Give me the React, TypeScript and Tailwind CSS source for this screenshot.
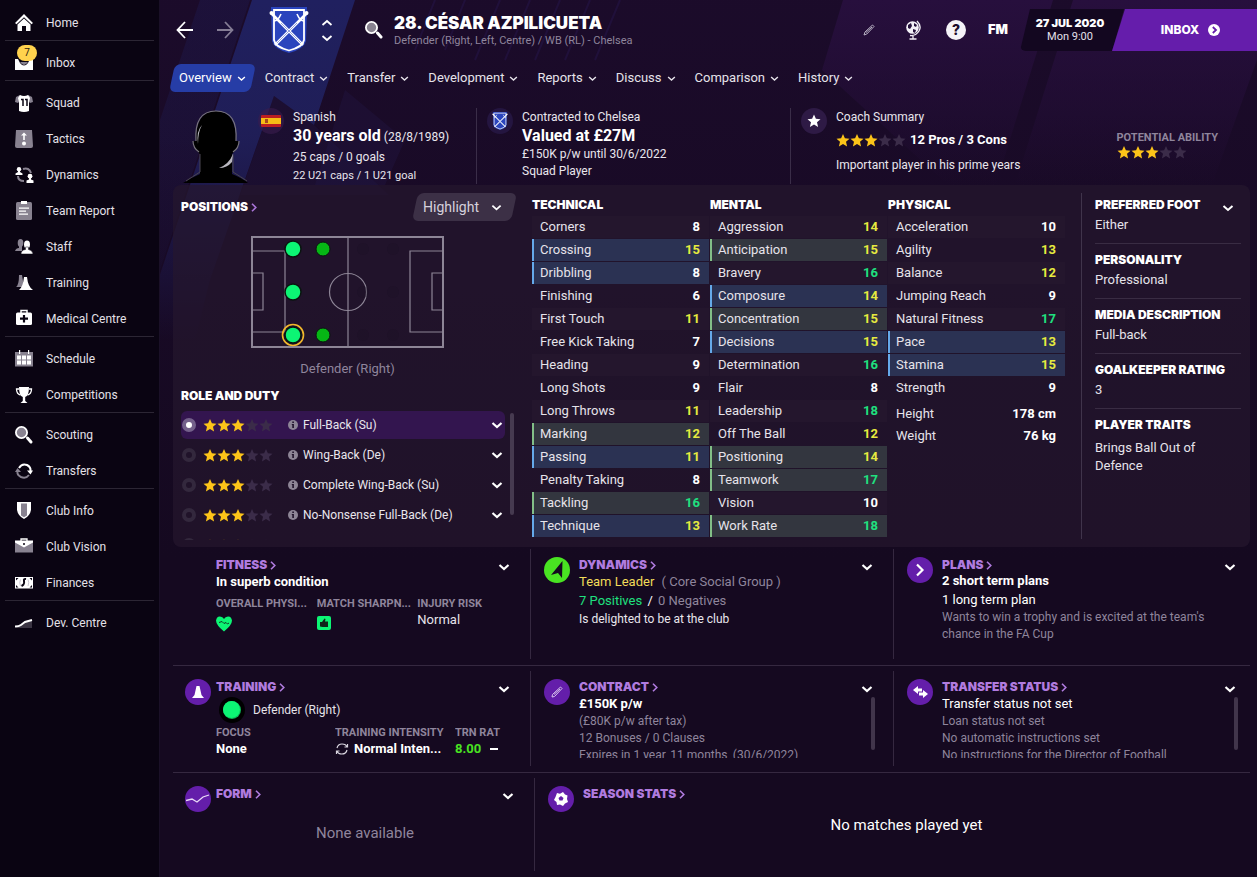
import type { ReactNode } from 'react'

/* ---------- shared bits ---------- */

const heading = "font-['Inter',sans-serif] text-xs font-black uppercase"

function Chevron({ size = 12, weight = 2, className = '' }: { size?: number; weight?: number; className?: string }) {
  return (
    <svg width={size} height={size} viewBox="0 0 12 12" fill="none" stroke="currentColor" strokeWidth={weight} className={className}>
      <path d="M1.5 4 6 8l4.500-4" />
    </svg>
  )
}

function Arrow() {
  return (
    <svg width="6" height="9" viewBox="0 0 6 9" fill="none" stroke="currentColor" strokeWidth="1.600">
      <path d="M1 .7 4.800 4.500 1 8.300" />
    </svg>
  )
}

function Stars({ value, dim = false }: { value: number; dim?: boolean }) {
  return (
    <span className={`flex shrink-0 ${dim ? 'opacity-30' : ''}`} role="img" aria-label={`${value} / 5`}>
      {[1, 2, 3, 4, 5].map((n) => (
        <svg key={n} width="14" height="13" viewBox="0 0 14 13" fill={n <= value ? '#fcc419' : '#3b2c49'}>
          <path d="M7 0l1.900 4.300 4.600.4-3.500 3.100 1.100 4.700L7 10l-4.100 2.500L4 7.800.500 4.700l4.600-.4z" />
        </svg>
      ))}
    </span>
  )
}

function Crest({ className }: { className: string }) {
  return (
    <svg viewBox="0 0 40 46" className={className} fill="none">
      <path d="M2 0h36l-1 34q-2 8-17 12Q5 42 3 34z" fill="#2a44bd" />
      <path d="M5 3h30v30q-1 7-15 10.500Q6 40 5 33z" stroke="#fff" strokeWidth="1.800" />
      <path d="M2 6l32 32M38 6 6 38" stroke="#fff" strokeWidth="2.600" />
      <path d="M5 14q4 0 7-7M28 7q3 7 7 7" stroke="#fff" strokeWidth="1.600" />
      <circle cx="2.500" cy="6" r="2" fill="#fff" />
      <circle cx="37.500" cy="6" r="2" fill="#fff" />
      <path d="M12 16l20 20M28 16 8 36" stroke="#2a44bd" strokeWidth=".5" />
    </svg>
  )
}

/* ---------- sidebar ---------- */

const icons: Record<string, ReactNode> = {
  home: (
    <>
      <path d="M0 9 9 0l9 9-1.500 1.300L9 3.200 1.500 10.300z" fill="#fff" />
      <path d="M2.500 10.500 9 4.500l6.500 6V17h-4.500v-5h-4v5H2.500z" fill="#fff" />
    </>
  ),
  inbox: (
    <>
      <path d="M0 5h3l2 4q4 5 8 0l2-4h3v11H0z" fill="#fff" />
      <path d="M5 8h8q-4 6-8 0z" fill="#888290" />
    </>
  ),
  squad: (
    <>
      <path d="M5 1 1 3 0 8l3 1 2-2zM13 1l4 2 1 5-3 1-2-2z" fill="#888290" />
      <path d="M5 1q4 2 8 0l2 3-1 4v9q-5 2-10 0V8L3 4z" fill="#fff" />
      <path d="M6 5.500h2V12M10 5.500h2V12" stroke="#0a0412" strokeWidth="1.500" fill="none" />
    </>
  ),
  tactics: (
    <>
      <path d="M1 0h16l1 16q0 2-2 2H2q-2 0-2-2z" fill="#888290" />
      <path d="M8.200 10V5.500H6L9 2.500l3 3H9.800V10z" fill="#fff" />
      <circle cx="9" cy="13.500" r="2" fill="#fff" />
    </>
  ),
  dynamics: (
    <>
      <path d="M8 3q6-2 8 4M3 10q0 5 6 5" stroke="#888290" strokeWidth="2" fill="none" />
      <circle cx="4" cy="3.200" r="2.200" fill="#fff" />
      <path d="M3 4h2v2l2.500 1.500V9H.500V7.500L3 6z" fill="#fff" />
      <circle cx="15" cy="10.200" r="2.400" fill="#fff" />
      <path d="M14 11h2v2.500l2.500 1V17h-7v-2.500l2.500-1z" fill="#fff" />
    </>
  ),
  report: (
    <>
      <rect x="1" y="0" width="16" height="18" rx="1.500" fill="#888290" />
      <path d="M6-1h6v3H6zM4 5.500h10v1.200H4zM4 8.500h7v1.200H4zM4 11.500h9v1.200H4z" fill="#fff" />
    </>
  ),
  staff: (
    <>
      <ellipse cx="5.500" cy="5" rx="2.800" ry="4" fill="#888290" />
      <path d="M0 13q1-3 4-3V8h3v5z" fill="#888290" />
      <ellipse cx="12" cy="6.500" rx="3" ry="4" fill="#fff" />
      <path d="M6 16q0-4 4.500-4.500V9h3v2.500q4 .5 4.500 4.500z" fill="#fff" stroke="#0a0412" strokeWidth=".5" />
    </>
  ),
  training: (
    <>
      <path d="M1 13q3-2 3-12h3l2 12z" fill="#888290" />
      <path d="M4 16q4-3 5-13h3q1 10 6 13z" fill="#fff" />
    </>
  ),
  medical: (
    <>
      <path d="M6 3V.500h6V3" stroke="#fff" strokeWidth="1.500" fill="none" />
      <rect x="1" y="2.500" width="16" height="12.500" rx="1.500" fill="#fff" />
      <path d="M9 5v7.500M5 8.700h8" stroke="#0a0412" strokeWidth="2.200" />
    </>
  ),
  schedule: (
    <>
      <path d="M0 2h18v14.500H0z" fill="#888290" />
      <path d="M2 5.500h4v4H2zM7 5.500h4v4H7zM12 5.500h4v4h-4zM2 10.500h4v4H2zM7 10.500h4v4H7zM12 10.500h4v4h-4zM4 0h1.200v4H4zM13 0h1.200v4H13z" fill="#fff" />
    </>
  ),
  cup: (
    <>
      <path d="M4 3H1.500q0 5 4 6M14 3h2.500q0 5-4 6" stroke="#fff" strokeWidth="1.300" fill="none" />
      <path d="M4 1h10q0 9-3.800 10v4l2.300 2h-7l2.300-2v-4Q4 10 4 1z" fill="#fff" />
    </>
  ),
  search: (
    <>
      <circle cx="6.500" cy="6.500" r="5.600" fill="#888290" stroke="#fff" strokeWidth="1.800" />
      <path d="m12.500 12 3.500 4" stroke="#fff" strokeWidth="3" strokeLinecap="round" />
    </>
  ),
  transfers: (
    <>
      <path d="M4 6q3-5 8-3 4 2 3.500 6" stroke="#fff" strokeWidth="2" fill="none" />
      <path d="M18 8.500h-6l3.500 4z" fill="#fff" />
      <path d="M14 13q-3 4-8 2-4-2-3.500-5" stroke="#888290" strokeWidth="2" fill="none" />
      <path d="M0 10h6L2.500 6z" fill="#888290" />
    </>
  ),
  shield: (
    <>
      <path d="M2 0h14v8q-1 6-7 9-6-3-7-9z" fill="#fff" />
      <path d="M6 1.500h6v12l-3 1.700-3-1.700z" fill="#888290" />
    </>
  ),
  briefcase: (
    <>
      <path d="M6 3V1h6v2" stroke="#fff" strokeWidth="1.300" fill="none" />
      <path d="M0 3h18v11.500H0z" fill="#888290" />
      <path d="M0 2.500h18v2L9 9.500 0 4.500z" fill="#fff" />
      <circle cx="9" cy="6" r="1" fill="#0a0412" />
    </>
  ),
  money: (
    <>
      <path d="M0 3h18v11.500H0z" fill="#fff" />
      <path d="M11 5q-2.500-.5-2 2t-.500 3.500-2 1.500" stroke="#0a0412" strokeWidth="2" fill="none" />
      <path d="M5.500 5.500q-1.500 3 0 6.500M13 5.500q1.500 3 0 6.500" stroke="#c9c5cf" strokeWidth="1" fill="none" />
      <path d="M1 4h2.500L1 6.500zM17 4h-2.500L17 6.500zM1 13.500h2.500L1 11zM17 13.500h-2.500L17 11z" fill="#0a0412" />
    </>
  ),
  chart: (
    <>
      <path d="M1 13l6-1.500 4-3 6-2V14H1z" fill="#3a3442" />
      <path d="M0 12.500q4 0 6-1.500t4-3l7-2" stroke="#fff" strokeWidth="2" fill="none" />
    </>
  ),
}

const navGroups = [
  [['home', 'Home']],
  [['inbox', 'Inbox']],
  [
    ['squad', 'Squad'],
    ['tactics', 'Tactics'],
    ['dynamics', 'Dynamics'],
    ['report', 'Team Report'],
    ['staff', 'Staff'],
    ['training', 'Training'],
    ['medical', 'Medical Centre'],
  ],
  [
    ['schedule', 'Schedule'],
    ['cup', 'Competitions'],
  ],
  [
    ['search', 'Scouting'],
    ['transfers', 'Transfers'],
  ],
  [
    ['shield', 'Club Info'],
    ['briefcase', 'Club Vision'],
    ['money', 'Finances'],
  ],
  [['chart', 'Dev. Centre']],
]

function Sidebar() {
  return (
    <nav className="w-40 shrink-0 border-r border-[#1a1027] bg-[#0a0412] px-[5px] pt-px">
      {navGroups.map((group, i) => (
        <ul key={i} className="border-b border-[#2c2634] pt-[3px] last:border-0">
          {group.map(([icon, label]) => (
            <li key={label}>
              <a href="#" className="relative flex h-9 items-center gap-[13px] pt-[2px] pl-[10px] text-xs text-[#e4e1e8]">
                <svg width="18" height="18" viewBox="0 0 18 18" className="overflow-visible">
                  {icons[icon]}
                </svg>
                {label}
                {icon === 'inbox' && (
                  <span className="absolute top-px left-3 flex h-4 w-5 items-center justify-center rounded-full bg-[#ffd24d] text-[10px] text-[#2b2111]">
                    7
                  </span>
                )}
              </a>
            </li>
          ))}
        </ul>
      ))}
    </nav>
  )
}

/* ---------- header ---------- */

function Header() {
  return (
    <header className="flex h-[60px] items-center">
      <button aria-label="Back" className="ml-4">
        <svg width="18" height="18" viewBox="0 0 18 18" fill="none" stroke="#fff" strokeWidth="1.800">
          <path d="M17 9H1.500M9 1 1.500 9 9 17" />
        </svg>
      </button>
      <button aria-label="Forward" className="ml-[22px]">
        <svg width="18" height="18" viewBox="0 0 18 18" fill="none" stroke="#857d95" strokeWidth="1.800">
          <path d="M1 9h15.500M9 1l7.500 8L9 17" />
        </svg>
      </button>
      <Crest className="ml-[35px] h-[46px] w-10" />
      <div className="ml-3 flex flex-col gap-[3px] text-white">
        <button aria-label="Previous player">
          <Chevron className="rotate-180" weight={1.800} />
        </button>
        <button aria-label="Next player">
          <Chevron weight={1.800} />
        </button>
      </div>
      <button aria-label="Search" className="ml-8">
        <svg width="18" height="18" viewBox="0 0 18 18">{icons.search}</svg>
      </button>
      <div className="ml-[11px] pt-px">
        <h1 className="font-['Inter',sans-serif] text-[17px] leading-5 font-black text-white">28. CÉSAR AZPILICUETA</h1>
        <p className="text-[11px] leading-4 text-[#8f859c]">Defender (Right, Left, Centre) / WB (RL) - Chelsea</p>
      </div>

      <div className="ml-auto flex items-center">
        <button aria-label="Edit" className="mr-[29px]">
          <svg width="12" height="12" viewBox="0 0 12 12" fill="none" stroke="#b9b2c4" strokeWidth="1">
            <path d="M1 11l1-3L9.500 1 11 2.500 3.800 10zM3 8.500 9 3" />
          </svg>
        </button>
        <button aria-label="World" className="mr-6">
          <svg width="18" height="20" viewBox="0 0 18 20" fill="none">
            <circle cx="8.500" cy="7.500" r="6.300" fill="#f3f0f7" />
            <path d="M4 5l3-2 1 3-2 3-2-1zM10 3l3 2-1 2-2-1zM9 9l3 1-1 3-2-1z" fill="#23103a" />
            <path d="M13 1q5 5 2 10t-9 4.500M9 16v2.500M5.500 19h7" stroke="#f3f0f7" strokeWidth="1.300" />
          </svg>
        </button>
        <button
          aria-label="Help"
          className="mr-[22px] flex size-5 items-center justify-center rounded-full bg-[#f5f3f8] font-['Inter',sans-serif] text-sm font-extrabold text-[#1b0c2b]"
        >
          ?
        </button>
        <button className="mr-3 font-['Inter',sans-serif] text-[13px] font-black text-white">FM</button>
        <div className="flex h-[42px] w-[104px] flex-col items-center justify-center rounded-l-md bg-[#130720] pr-1 [clip-path:polygon(10px_0,100%_0,calc(100%_-_12px)_100%,0_100%)]">
          <span className="font-['Inter',sans-serif] text-[11px] leading-[14px] font-black text-white">27 JUL 2020</span>
          <span className="text-[11px] leading-[14px] text-[#e4e0ea]">Mon 9:00</span>
        </div>
        <button className="-ml-3 flex h-[42px] w-[145px] items-center justify-center gap-[9px] bg-[#651dab] pl-3 font-['Inter',sans-serif] text-xs font-extrabold text-white [clip-path:polygon(13px_0,100%_0,100%_100%,0_100%)]">
          INBOX
          <svg width="12" height="12" viewBox="0 0 12 12" fill="none">
            <circle cx="6" cy="6" r="6" fill="#fff" />
            <path d="M4.800 3 8 6 4.800 9" stroke="#651dab" strokeWidth="1.800" />
          </svg>
        </button>
      </div>
    </header>
  )
}

const tabs = ['Overview', 'Contract', 'Transfer', 'Development', 'Reports', 'Discuss', 'Comparison', 'History']

function Tabs() {
  return (
    <div className="flex h-9 items-center pl-[9px]">
      {tabs.map((tab, i) => (
        <button
          key={tab}
          className={
            i === 0
              ? 'relative mr-[9px] flex h-7 items-center gap-[5px] px-[10px] text-[13px] text-white'
              : 'mr-[19px] flex h-7 items-center gap-[5px] text-[13px] text-[#e6e3ea]'
          }
        >
          {i === 0 && <span className="absolute inset-x-[3px] inset-y-0 -z-10 -skew-x-12 rounded-md bg-[#263da6]" />}
          {tab}
          <Chevron size={9} weight={1.900} />
        </button>
      ))}
    </div>
  )
}

/* ---------- player summary ---------- */

function Summary() {
  return (
    <section className="ml-[13px] mr-[7px] grid h-[89px] grid-cols-[303fr_314fr_460fr] pt-3 pb-[2px] text-xs text-[#e9e6ed]">
      <div className="flex pl-[10px]">
        <svg width="66" height="75" viewBox="0 0 66 75" className="shrink-0">
          <path d="M0 75q8-5 17-9V46l-3-3q-4-4-4-10h3Q13 3 33 3t20 30h3q0 6-4 10l-3 3v20q10 4 16 9z" fill="#000" />
          <path d="M13 33Q11 3 33 3t20 30M56 33q0 7-6 11M10 33q0 7 6 11" stroke="#77737d" strokeWidth="1.200" fill="none" />
          <path d="M50 46v18q8 5 14 9M17 46v18q-8 5-14 9" stroke="#4a4650" fill="none" />
          <path d="M19 17q-6 6-4 19 0-12 4-19zM50 46q-4 10-14 14 8 0 13-6z" fill="#b9b7bf" />
        </svg>
        <div className="mr-px ml-[9px] flex size-[26px] shrink-0 items-center justify-center rounded-full bg-[#3a1d4e]/60">
          <svg width="20" height="12" viewBox="0 0 20 12">
            <rect width="20" height="12" rx="1" fill="#bb1d22" />
            <path d="M0 3h20v6H0z" fill="#f6bd16" />
            <rect x="4" y="4" width="3" height="4" fill="#a8481e" />
          </svg>
        </div>
        <div className="ml-2 whitespace-nowrap">
          <p className="leading-[18px]">Spanish</p>
          <p className="leading-[19px]">
            <strong className="text-base leading-[19px] text-white">30 years old</strong> <span>(28/8/1989)</span>
          </p>
          <p className="leading-[20px]">25 caps / 0 goals</p>
          <p className="text-[11px] leading-[17px]">22 U21 caps / 1 U21 goal</p>
        </div>
      </div>
      <div className="flex gap-[9px] border-l border-[#3a2d48] pl-[10px]">
        <div className="flex size-[26px] shrink-0 items-center justify-center rounded-full bg-[#2a1a4a]/70">
          <Crest className="h-[18px] w-4" />
        </div>
        <div className="whitespace-nowrap">
          <p className="leading-[18px]">Contracted to Chelsea</p>
          <p className="text-base leading-[19px] font-bold text-white">Valued at £27M</p>
          <p className="leading-[18px]">£150K p/w until 30/6/2022</p>
          <p className="leading-[17px]">Squad Player</p>
        </div>
      </div>
      <div className="flex gap-[9px] border-l border-[#3a2d48] pl-[10px]">
        <div className="flex size-[26px] shrink-0 items-center justify-center rounded-full bg-[#2e1a45]">
          <svg width="14" height="14" viewBox="0 0 14 13" fill="#fff">
            <path d="M7 0l1.900 4.300 4.600.4-3.500 3.100 1.100 4.700L7 10l-4.100 2.500L4 7.800.500 4.700l4.600-.4z" />
          </svg>
        </div>
        <div>
          <p className="leading-[18px]">Coach Summary</p>
          <p className="mt-[2px] flex items-center gap-1 text-[13px] leading-[24px] font-bold text-white">
            <Stars value={3} /> 12 Pros / 3 Cons
          </p>
          <p className="mt-1 leading-[18px]">Important player in his prime years</p>
        </div>
        <div className="mr-8 ml-auto mt-[22px]">
          <p className="text-[11px] leading-4 font-bold text-[#8f859c]">POTENTIAL ABILITY</p>
          <Stars value={3} />
        </div>
      </div>
    </section>
  )
}

/* ---------- positions and roles ---------- */

function Pitch() {
  return (
    <svg width="193" height="112" viewBox="0 0 193 112" fill="none" className="mx-auto mt-[15px]">
      <g stroke="#8d8596" strokeWidth="1.200">
        <rect x="1" y="1" width="191" height="110" strokeWidth="2" />
        <path d="M97 1v110M1 15h33v81H1M1 37h11v37H1M192 15h-33v81h33M192 37h-11v37h11" />
        <circle cx="97" cy="56" r="18.500" />
      </g>
      <g fill="#1a1024">
        {[112, 142].flatMap((x) => [13, 56, 99].map((y) => <circle key={`${x}${y}`} cx={x} cy={y} r="6" opacity=".3" />))}
      </g>
      <g fill="#0cf574" stroke="#0a1410" strokeWidth="1.500">
        <circle cx="42" cy="13" r="8" />
        <circle cx="42" cy="56" r="8" />
        <circle cx="42" cy="99" r="8" />
      </g>
      <circle cx="42" cy="99" r="10.500" stroke="#f2b92c" strokeWidth="1.600" />
      <g fill="#06b615" stroke="#0a1410">
        <circle cx="72" cy="13" r="7" />
        <circle cx="72" cy="99" r="7" />
      </g>
    </svg>
  )
}

const roles = ['Full-Back (Su)', 'Wing-Back (De)', 'Complete Wing-Back (Su)', 'No-Nonsense Full-Back (De)', '']

function Positions() {
  return (
    <div className="pt-2 pb-[7px] pr-[18px] pl-2">
      <div className="flex h-7 items-center justify-between">
        <a href="#" className={`${heading} flex items-center gap-[3px] text-white`}>
          Positions <span className="text-[#a974d8]"><Arrow /></span>
        </a>
        <button className="relative flex h-7 items-center gap-3 pr-3 pl-2 text-sm text-[#d6d1dc]">
          <span className="absolute inset-0 -z-10 -skew-x-12 rounded-md bg-[#3c3046]" />
          Highlight
          <Chevron size={11} weight={2} className="text-white" />
        </button>
      </div>
      <Pitch />
      <p className="mt-[9px] text-center text-[13px] leading-6 text-[#8f859c]">Defender (Right)</p>
      <h2 className={`${heading} mt-[5px] leading-5 text-white`}>Role and Duty</h2>
      <div className="mt-[5px] flex gap-[5px]">
        <div className="flex h-[129px] flex-1 flex-col gap-[2px] overflow-hidden">
          {roles.map((role, i) => (
            <div
              key={i}
              className={`flex h-7 shrink-0 items-center rounded-md pr-[2px] pl-px text-[#e9e6ed] ${i === 0 ? 'bg-[#33154f]' : ''}`}
            >
              <label className="flex flex-1 items-center text-xs">
                <input
                  type="radio"
                  name="role"
                  defaultChecked={i === 0}
                  className="mr-[7px] size-[14px] appearance-none rounded-full border-4 border-[#33283d] checked:border-[#73608a] checked:bg-white"
                />
                <Stars value={3} dim={!role} />
                {role && (
                  <svg width="10" height="10" viewBox="0 0 10 10" className="mr-[5px] ml-[15px]">
                    <circle cx="5" cy="5" r="5" fill="#8d8596" />
                    <path d="M4.300 1.500h1.600V3H4.300zM3.800 4h2.100v4H4.300V5h-.5z" fill="#1f122a" />
                  </svg>
                )}
                {role}
              </label>
              {role && (
                <button aria-label={`Choose duty for ${role}`} className="text-white">
                  <Chevron weight={2.200} />
                </button>
              )}
            </div>
          ))}
        </div>
        <div className="mt-[2px] h-[102px] w-1 rounded-full bg-[#463a50]" />
      </div>
    </div>
  )
}

/* ---------- attributes ---------- */

type Attribute = [name: string, value: number, mark?: 'key' | 'useful']

const technical: Attribute[] = [
  ['Corners', 8],
  ['Crossing', 15, 'key'],
  ['Dribbling', 8, 'key'],
  ['Finishing', 6],
  ['First Touch', 11],
  ['Free Kick Taking', 7],
  ['Heading', 9],
  ['Long Shots', 9],
  ['Long Throws', 11],
  ['Marking', 12, 'useful'],
  ['Passing', 11, 'key'],
  ['Penalty Taking', 8],
  ['Tackling', 16, 'useful'],
  ['Technique', 13, 'key'],
]

const mental: Attribute[] = [
  ['Aggression', 14],
  ['Anticipation', 15, 'useful'],
  ['Bravery', 16],
  ['Composure', 14, 'key'],
  ['Concentration', 15, 'useful'],
  ['Decisions', 15, 'key'],
  ['Determination', 16],
  ['Flair', 8],
  ['Leadership', 18],
  ['Off The Ball', 12],
  ['Positioning', 14, 'useful'],
  ['Teamwork', 17, 'useful'],
  ['Vision', 10],
  ['Work Rate', 18, 'useful'],
]

const physical: Attribute[] = [
  ['Acceleration', 10],
  ['Agility', 13],
  ['Balance', 12],
  ['Jumping Reach', 9],
  ['Natural Fitness', 17],
  ['Pace', 13, 'key'],
  ['Stamina', 15, 'key'],
  ['Strength', 9],
]

function valueColor(value: number) {
  if (value > 15) return 'text-[#1fe07f]'
  if (value > 10) return 'text-[#e6ea3f]'
  return 'text-white'
}

function rowColor(mark: Attribute[2], index: number) {
  if (mark === 'key') return 'bg-[#2b3253]'
  if (mark === 'useful') return 'bg-[#33363f]'
  return index % 2 === 0 ? 'bg-[#24162d]' : ''
}

function edgeColor(mark: Attribute[2]) {
  if (mark === 'key') return 'border-[#65a9ea]'
  if (mark === 'useful') return 'border-[#82bf87]'
  return 'border-transparent'
}

function AttributeTable({ title, rows }: { title: string; rows: Attribute[] }) {
  return (
    <table className="w-full border-separate border-spacing-x-0 border-spacing-y-px text-[13px] leading-[22px]">
      <caption className={`${heading} text-left leading-5 text-white`}>{title}</caption>
      <tbody>
        {rows.map(([name, value, mark], i) => (
          <tr key={name} className={rowColor(mark, i)}>
            <th scope="row" className={`border-l-2 p-0 pl-[6px] text-left font-normal text-[#e6e3ea] ${edgeColor(mark)}`}>
              {name}
            </th>
            <td className={`p-0 pr-[9px] text-right font-bold ${valueColor(value)}`}>{value}</td>
          </tr>
        ))}
      </tbody>
    </table>
  )
}

function Attributes() {
  return (
    <div className="grid grid-cols-3 items-start gap-px pt-[10px] pr-4">
      <AttributeTable title="Technical" rows={technical} />
      <AttributeTable title="Mental" rows={mental} />
      <div>
        <AttributeTable title="Physical" rows={physical} />
        <dl className="mt-[3px] grid grid-cols-2 pr-[9px] pl-2 text-[13px] leading-[22px] text-[#e6e3ea]">
          <dt>Height</dt>
          <dd className="text-right font-bold text-white">178 cm</dd>
          <dt>Weight</dt>
          <dd className="text-right font-bold text-white">76 kg</dd>
        </dl>
      </div>
    </div>
  )
}

const profile = [
  ['Preferred Foot', 'Either'],
  ['Personality', 'Professional'],
  ['Media Description', 'Full-back'],
  ['Goalkeeper Rating', '3'],
  ['Player Traits', 'Brings Ball Out of Defence'],
]

function Profile() {
  return (
    <div className="relative my-2 border-l border-[#40344b] pr-[9px] pl-[13px]">
      <dl className="text-[13px] leading-[18px] text-[#e6e3ea]">
        {profile.map(([label, value], i) => (
          <div key={label} className={`border-[#392c43] ${i < 4 ? 'border-b pb-[9px]' : ''} ${i > 0 ? 'pt-[6px]' : 'pt-[2px]'}`}>
            <dt className={`${heading} whitespace-nowrap leading-5 text-white`}>{label}</dt>
            <dd className={i === 4 ? 'mt-1 pr-5' : 'mt-px'}>{value}</dd>
          </div>
        ))}
      </dl>
      <button aria-label="Change profile view" className="absolute top-[9px] right-4 text-white">
        <Chevron size={12} weight={2} />
      </button>
    </div>
  )
}

/* ---------- lower cards ---------- */

interface CardProps {
  title: string
  icon?: ReactNode
  green?: boolean
  menu?: boolean
  first?: boolean
  scroll?: boolean
  last?: boolean
  children?: ReactNode
}

function Card({ title, icon, green = false, menu = true, first = false, last = false, scroll = false, children }: CardProps) {
  return (
    <section
      className={`relative flex min-w-0 ${last ? 'pr-[14px]' : 'pr-5'} ${first ? 'gap-[5px] pl-3' : 'gap-[9px] border-l border-[#352840] pl-[13px]'}`}
    >
      <div
        className={`mt-2 flex size-[26px] shrink-0 items-center justify-center rounded-full ${icon ? (green ? 'bg-[#49e322]' : 'bg-[#641eaa]') : ''}`}
      >
        {icon}
      </div>
      <div className="min-w-0 flex-1">
        <div className="-mb-1 flex h-6 items-center justify-between pt-2">
          <a href="#" className={`${heading} flex items-center gap-[3px] leading-4 text-[#b07bdf]`}>
            {title} <Arrow />
          </a>
          {menu && (
            <button aria-label={`${title} options`} className="pt-1 text-white">
              <Chevron weight={2.200} />
            </button>
          )}
        </div>
        {children}
      </div>
      {scroll && <div className={`absolute bottom-4 h-[53px] w-1 rounded-full bg-[#41354b] ${last ? 'right-3' : 'right-[18px]'}`} />}
    </section>
  )
}

const rowClass = 'border-t border-[#352840] pt-[5px] pb-[6px]'
const labelClass = 'truncate text-[11px] font-bold text-[#8f859c]'
const detailsClass = 'mt-[3px] h-[64px] overflow-hidden pr-5 text-xs leading-[17px] whitespace-nowrap text-[#8f859c]'

export default function App() {
  return (
    <div className="flex min-h-screen bg-[#150920] font-['Roboto',sans-serif]">
      <Sidebar />
      <main className="relative isolate min-w-0 flex-1 overflow-hidden">
        <svg className="absolute top-0 left-0 -z-20" width="1400" height="560" viewBox="0 0 1400 560" fill="none">
          <defs>
            <linearGradient id="ribbon" gradientUnits="userSpaceOnUse" x1="0" y1="0" x2="0" y2="340">
              <stop stopColor="#20205f" />
              <stop offset=".4" stopColor="#20205c" stopOpacity=".9" />
              <stop offset="1" stopColor="#20205f" stopOpacity="0" />
            </linearGradient>
            <linearGradient id="glow" x1="0" y1="0" x2="0" y2="1">
              <stop stopColor="#270f3d" />
              <stop offset="1" stopColor="#270f3d" stopOpacity="0" />
            </linearGradient>
          </defs>
          <path d="M0 0h1400v560H0z" fill="url(#glow)" opacity=".35" />
          <path d="M40 0h50L0 270V120z" fill="url(#ribbon)" opacity=".3" />
          <path d="M92 0h103l-41 125-40-29-64 184-15 60h-57z" fill="url(#ribbon)" />
          <path d="M114 96l40 29 75 70H80z" fill="#231b4c" opacity=".25" />
          <path d="M185 90l60 50-20 45h-70z" fill="#231b4c" opacity=".3" />
          <path
            d="M255 50l20-50M285 50l20-50M315 60l25-60M345 60l25-60M375 60l25-60M405 60l25-60M435 60l25-60"
            stroke="#251446"
            strokeWidth="2"
            opacity=".6"
          />
          <path d="M683 0h210l-57 185h-48L662 70z" fill="url(#glow)" />
          <path d="M913 0h184v60l-45 125H855z" fill="url(#glow)" />
        </svg>

        <Header />
        <Tabs />
        <Summary />

        <section className="relative isolate mr-[7px] ml-[13px] grid grid-cols-[359fr_549fr_169fr] rounded-lg bg-[#25172e]/70">
          <Positions />
          <Attributes />
          <Profile />
        </section>

        <div className="mr-[7px] ml-[13px]">
          <div className="grid h-[118px] grid-cols-[357fr_363fr_357fr] pt-[2px] pb-[6px]">
            <Card title="Fitness" first>
              <div className="pt-[5px]">
                <p className="text-[13px] leading-4 font-bold text-white">In superb condition</p>
                <div className="-mr-2 mt-[6px] grid grid-cols-3 text-[13px] leading-4 text-[#e6e3ea]">
                  <p className={labelClass}>OVERALL PHYSI...</p>
                  <p className={labelClass}>MATCH SHARPN...</p>
                  <p className={labelClass}>INJURY RISK</p>
                  <svg width="16" height="16" viewBox="0 0 16 16" className="mt-1">
                    <path d="M8 15.500Q0 9 0 4.500 1-.5 5 .7 7 1 8 3q1-2 3-2.300 4-1.200 5 3.800 0 4.500-8 11z" fill="#0cf574" />
                    <path d="M3 6.500l3-1 2 2 2-1 1.500 1.500L13 7" stroke="#123a25" fill="none" />
                  </svg>
                  <svg width="14" height="14" viewBox="0 0 14 14" className="mt-1">
                    <rect width="14" height="14" rx="2" fill="#0cf574" />
                    <path d="M3 6h2l2.500-3.500 1 .5L8 5.500h3V11H5.500L3 10.500z" fill="#10241a" />
                  </svg>
                  <p>Normal</p>
                </div>
              </div>
            </Card>
            <Card
              title="Dynamics"
              green
              icon={
                <svg width="14" height="18" viewBox="0 0 14 18" fill="#150920">
                  <path d="M12.500 0 12 17 8 12 1 14z" />
                </svg>
              }
            >
              <div className="pt-[3px] text-[13px] leading-[19px] text-[#8f859c]">
                <p>
                  <span className="mr-1 text-[#f2dc5a]">Team Leader</span> ( Core Social Group )
                </p>
                <p>
                  <span className="text-[#1fe07f]">7 Positives</span> <span className="mx-[2px] text-white">/</span> 0 Negatives
                </p>
                <p className="text-xs leading-[18px] text-[#e9e6ed]">Is delighted to be at the club</p>
              </div>
            </Card>
            <Card
              title="Plans"
              last
              icon={
                <svg width="10" height="14" viewBox="0 0 10 14" fill="none" stroke="#fff" strokeWidth="2.200">
                  <path d="M2 1.500 7.500 7 2 12.500" />
                </svg>
              }
            >
              <div className="pt-[2px] text-xs leading-[17px] text-[#8f859c]">
                <p className="text-[13px] leading-[19px] font-bold text-white">2 short term plans</p>
                <p className="text-[13px] leading-[19px] text-white">1 long term plan</p>
                <p>Wants to win a trophy and is excited at the team's chance in the FA Cup</p>
              </div>
            </Card>
          </div>

          <div className={`grid h-[107px] grid-cols-[357fr_363fr_357fr] ${rowClass}`}>
            <Card
              title="Training"
              first
              icon={
                <svg width="12" height="13" viewBox="0 0 12 13" fill="#fff">
                  <path d="M4.500 0h3l2 9 2.500 3H0l2.500-3z" />
                </svg>
              }
            >
              <div className="flex items-center gap-2 pt-[6px] text-xs text-[#e6e3ea]">
                <svg width="26" height="26" viewBox="0 0 26 26" className="ml-[3px]">
                  <circle cx="13" cy="13" r="13" fill="#000" />
                  <circle cx="13" cy="13" r="9" fill="#0cb558" />
                  <circle cx="12.500" cy="12.500" r="8.500" fill="#0cf574" />
                </svg>
                Defender (Right)
              </div>
              <div className="-mr-3 grid grid-cols-[119fr_120fr_67fr] pt-[2px] text-[13px] leading-4 font-bold text-white">
                <p className={labelClass}>FOCUS</p>
                <p className={labelClass}>TRAINING INTENSITY</p>
                <p className={labelClass}>TRN RAT</p>
                <p>None</p>
                <p className="flex items-center gap-[5px] whitespace-nowrap">
                  <svg width="14" height="12" viewBox="0 0 14 12" fill="none" stroke="#d9d5df" strokeWidth="1.200">
                    <path d="M2 5q1-4 5-4t5 3M12.500 1v3h-3M12 7q-1 4-5 4T2 8M1.500 11V8h3" />
                  </svg>
                  Normal Inten...
                </p>
                <p className="flex gap-[9px]">
                  <span className="text-[#49e322]">8.00</span>
                  <span className="mt-[7px] h-[2px] w-2 bg-white" />
                </p>
              </div>
            </Card>
            <Card
              title="Contract"
              scroll
              icon={
                <svg width="12" height="12" viewBox="0 0 12 12" fill="none" stroke="#d8c4ee" strokeWidth="1">
                  <path d="M1 11l.5-2.500L9.500 1 11 2.500 3.500 10.500zM3 8.500 9 3" />
                </svg>
              }
            >
              <div className={detailsClass}>
                <p className="text-[13px] leading-[19px] font-bold text-white">£150K p/w</p>
                <p>(£80K p/w after tax)</p>
                <p>12 Bonuses / 0 Clauses</p>
                <p>Expires in 1 year, 11 months, (30/6/2022)</p>
              </div>
            </Card>
            <Card
              title="Transfer Status"
              last
              scroll
              icon={
                <svg width="15" height="12" viewBox="0 0 15 12" fill="#fff">
                  <path d="M0 4l5-4v2.500h4v3H5V8zM15 8l-5 4V9.500H6v-3h4V4z" />
                </svg>
              }
            >
              <div className={detailsClass}>
                <p className="text-[13px] leading-[19px] text-white">Transfer status not set</p>
                <p>Loan status not set</p>
                <p>No automatic instructions set</p>
                <p>No instructions for the Director of Football</p>
              </div>
            </Card>
          </div>

          <div className={`grid h-[105px] grid-cols-[361fr_716fr] ${rowClass}`}>
            <Card
              title="Form"
              first
              icon={
                <svg width="24" height="12" viewBox="0 0 24 12" fill="none" stroke="#e9dbf7" strokeWidth="1.300">
                  <path d="M0 7.500l6-1.500 5 3 6-5 6-2" />
                </svg>
              }
            >
              <p className="mt-[22px] text-center text-[15px] leading-[26px] text-[#8f859c]">None available</p>
            </Card>
            <Card
              title="Season Stats"
              menu={false}
              icon={
                <svg width="14" height="14" viewBox="0 0 14 14" fill="#fff">
                  <path d="M3 1l3 .7L9 0l2 2.500 2.500 1L13 7l1 3-3 1.500L9 14l-3-1.500-3 .5-.5-3L0 8l1.500-3z" />
                  <path d="M7 4l2.500 2-1 2.500h-3L4.500 6z" fill="#641eaa" />
                </svg>
              }
            >
              <p className="mt-[14px] text-center text-[15px] leading-[26px] text-white">No matches played yet</p>
            </Card>
          </div>
        </div>
      </main>
    </div>
  )
}
